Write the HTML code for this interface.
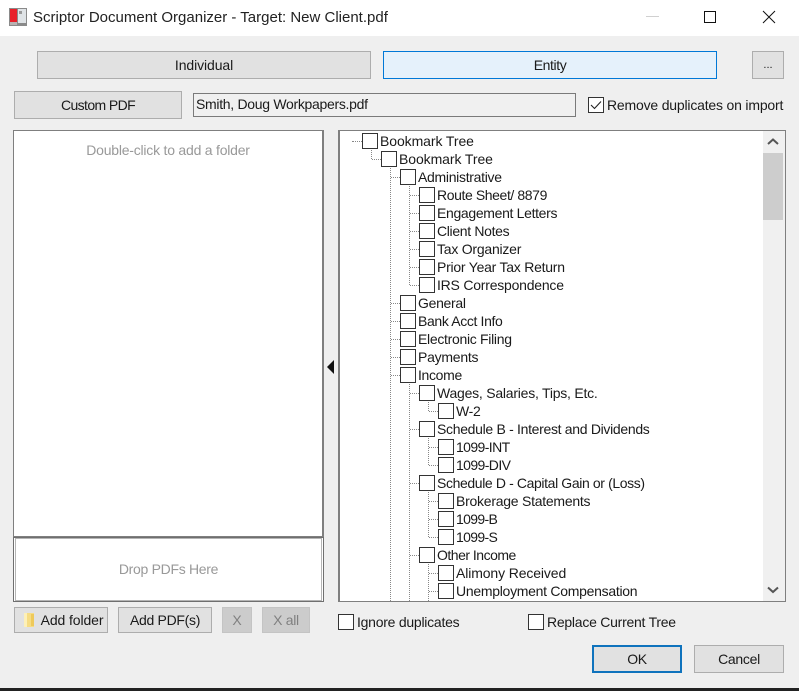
<!DOCTYPE html>
<html><head><meta charset="utf-8"><style>
html,body{margin:0;padding:0;width:799px;height:691px;overflow:hidden;background:#efefef;font-family:"Liberation Sans",sans-serif;font-size:14px;color:#1a1a1a}
div,span,svg{position:absolute;box-sizing:border-box}
.btn{background:#e1e1e1;border:1px solid #adadad;text-align:center;line-height:26px}
.cb{width:16px;height:16px;background:#fff;border:1px solid #333}
.t{white-space:nowrap;line-height:18px;height:18px;letter-spacing:-.3px}
.h{border-top:1px dotted #888;height:1px}
.v{border-left:1px dotted #888;width:1px}
</style></head><body>
<div style="left:0;top:0;width:799px;height:36px;background:#fff"></div>
<svg style="left:9px;top:8px" width="18" height="18" viewBox="0 0 18 18"><rect width="18" height="18" fill="#8a8a8a"/><rect x="1" y="1" width="7" height="13" fill="#e8202a"/><rect x="9" y="1" width="8" height="14" fill="#dfe3e6"/><rect x="10" y="3" width="3" height="3" fill="#9a9a9a"/><rect x="1" y="14" width="7" height="3" fill="#b9b1b1"/></svg>
<div class="t" style="left:33px;top:9px;font-size:15px;letter-spacing:0;color:#222">Scriptor Document Organizer - Target: New Client.pdf</div>
<div style="left:646px;top:16px;width:13px;height:1px;background:#d0d0d0"></div>
<div style="left:704px;top:11px;width:12px;height:12px;border:1px solid #111"></div>
<svg style="left:762px;top:10px" width="14" height="14" viewBox="0 0 14 14"><path d="M1 1L13 13M13 1L1 13" stroke="#111" stroke-width="1" fill="none"/></svg>

<div class="btn" style="left:37px;top:51px;width:334px;height:28px;letter-spacing:-.1px">Individual</div>
<div class="btn" style="left:383px;top:51px;width:334px;height:28px;background:#e5f1fb;border-color:#0078d7;letter-spacing:-.4px">Entity</div>
<div class="btn" style="left:752px;top:51px;width:32px;height:28px;font-size:11px">...</div>
<div class="btn" style="left:14px;top:91px;width:168px;height:28px;letter-spacing:-.6px">Custom PDF</div>
<div style="left:193px;top:93px;width:383px;height:24px;border:1px solid #7a7a7a;background:#f0f0f0;padding-left:2px;line-height:20px;letter-spacing:-.3px">Smith, Doug Workpapers.pdf</div>
<div class="cb" style="left:588px;top:97px"></div>
<svg style="left:588px;top:97px" width="16" height="16" viewBox="0 0 16 16"><path d="M3 8L6.500 11.500L13 4.500" stroke="#222" stroke-width="1.1" fill="none"/></svg>
<div class="t" style="left:607px;top:96px;letter-spacing:-.19px">Remove duplicates on import</div>

<div style="left:13px;top:130px;width:311px;height:408px;background:#fff;border:1px solid #7f7f7f;border-width:1px 2px 2px 1px;color:#999;text-align:center;padding-top:10px;line-height:18px;letter-spacing:-.22px">Double-click to add a folder</div>
<div style="left:13px;top:537px;width:311px;height:65px;background:#fff;border:1px solid #6f6f6f"></div>
<div style="left:15px;top:538px;width:307px;height:63px;border:1px solid #b5b5b5;color:#999;text-align:center;line-height:60px;letter-spacing:-.3px">Drop PDFs Here</div>

<svg style="left:326px;top:359px" width="9" height="16" viewBox="0 0 9 16"><path d="M8 1V15L1 8Z" fill="#111"/></svg>

<div style="left:338px;top:130px;width:448px;height:472px;background:#fff;border:1px solid #7f7f7f;border-left-width:2px"></div>
<div style="left:763px;top:131px;width:22px;height:470px;background:#f0f0f0"></div>
<div style="left:763px;top:153px;width:20px;height:67px;background:#cdcdcd"></div>
<svg style="left:767px;top:137px" width="12" height="10" viewBox="0 0 12 10"><path d="M1 7L6 2.500L11 7" stroke="#555" stroke-width="2" fill="none"/></svg>
<svg style="left:767px;top:585px" width="12" height="10" viewBox="0 0 12 10"><path d="M1 2.500L6 7L11 2.500" stroke="#555" stroke-width="2" fill="none"/></svg>

<!-- tree lines -->
<div class="h" style="left:352px;top:141px;width:10px"></div>
<div class="v" style="left:371px;top:150px;height:9px"></div>
<div class="h" style="left:372px;top:159px;width:9px"></div>
<div class="v" style="left:390px;top:168px;height:433px"></div>
<div class="v" style="left:409px;top:186px;height:99px"></div>
<div class="v" style="left:409px;top:384px;height:217px"></div>
<div class="v" style="left:428px;top:402px;height:9px"></div>
<div class="v" style="left:428px;top:438px;height:27px"></div>
<div class="v" style="left:428px;top:492px;height:45px"></div>
<div class="v" style="left:428px;top:564px;height:37px"></div>
<div class="h" style="left:391px;top:177px;width:9px"></div>
<div class="h" style="left:391px;top:303px;width:9px"></div>
<div class="h" style="left:391px;top:321px;width:9px"></div>
<div class="h" style="left:391px;top:339px;width:9px"></div>
<div class="h" style="left:391px;top:357px;width:9px"></div>
<div class="h" style="left:391px;top:375px;width:9px"></div>
<div class="h" style="left:410px;top:195px;width:9px"></div>
<div class="h" style="left:410px;top:213px;width:9px"></div>
<div class="h" style="left:410px;top:231px;width:9px"></div>
<div class="h" style="left:410px;top:249px;width:9px"></div>
<div class="h" style="left:410px;top:267px;width:9px"></div>
<div class="h" style="left:410px;top:285px;width:9px"></div>
<div class="h" style="left:410px;top:393px;width:9px"></div>
<div class="h" style="left:410px;top:429px;width:9px"></div>
<div class="h" style="left:410px;top:483px;width:9px"></div>
<div class="h" style="left:410px;top:555px;width:9px"></div>
<div class="h" style="left:429px;top:411px;width:9px"></div>
<div class="h" style="left:429px;top:447px;width:9px"></div>
<div class="h" style="left:429px;top:465px;width:9px"></div>
<div class="h" style="left:429px;top:501px;width:9px"></div>
<div class="h" style="left:429px;top:519px;width:9px"></div>
<div class="h" style="left:429px;top:537px;width:9px"></div>
<div class="h" style="left:429px;top:573px;width:9px"></div>
<div class="h" style="left:429px;top:591px;width:9px"></div>

<!-- tree rows -->
<div class="cb" style="left:362px;top:133px"></div><div class="t" style="left:380px;top:132px;letter-spacing:-.08px">Bookmark Tree</div>
<div class="cb" style="left:381px;top:151px"></div><div class="t" style="left:399px;top:150px;letter-spacing:-.08px">Bookmark Tree</div>
<div class="cb" style="left:400px;top:169px"></div><div class="t" style="left:418px;top:168px">Administrative</div>
<div class="cb" style="left:419px;top:187px"></div><div class="t" style="left:437px;top:186px;letter-spacing:-.4px">Route Sheet/ 8879</div>
<div class="cb" style="left:419px;top:205px"></div><div class="t" style="left:437px;top:204px;letter-spacing:-.33px">Engagement Letters</div>
<div class="cb" style="left:419px;top:223px"></div><div class="t" style="left:437px;top:222px;letter-spacing:-.33px">Client Notes</div>
<div class="cb" style="left:419px;top:241px"></div><div class="t" style="left:437px;top:240px;letter-spacing:-.23px">Tax Organizer</div>
<div class="cb" style="left:419px;top:259px"></div><div class="t" style="left:437px;top:258px;letter-spacing:-.24px">Prior Year Tax Return</div>
<div class="cb" style="left:419px;top:277px"></div><div class="t" style="left:437px;top:276px;letter-spacing:-.22px">IRS Correspondence</div>
<div class="cb" style="left:400px;top:295px"></div><div class="t" style="left:418px;top:294px">General</div>
<div class="cb" style="left:400px;top:313px"></div><div class="t" style="left:418px;top:312px;letter-spacing:-.36px">Bank Acct Info</div>
<div class="cb" style="left:400px;top:331px"></div><div class="t" style="left:418px;top:330px">Electronic Filing</div>
<div class="cb" style="left:400px;top:349px"></div><div class="t" style="left:418px;top:348px;letter-spacing:-.25px">Payments</div>
<div class="cb" style="left:400px;top:367px"></div><div class="t" style="left:418px;top:366px;letter-spacing:-.33px">Income</div>
<div class="cb" style="left:419px;top:385px"></div><div class="t" style="left:437px;top:384px;letter-spacing:-.23px">Wages, Salaries, Tips, Etc.</div>
<div class="cb" style="left:438px;top:403px"></div><div class="t" style="left:456px;top:402px;letter-spacing:-.33px">W-2</div>
<div class="cb" style="left:419px;top:421px"></div><div class="t" style="left:437px;top:420px;letter-spacing:-.31px">Schedule B - Interest and Dividends</div>
<div class="cb" style="left:438px;top:439px"></div><div class="t" style="left:456px;top:438px;letter-spacing:-.6px">1099-INT</div>
<div class="cb" style="left:438px;top:457px"></div><div class="t" style="left:456px;top:456px;letter-spacing:-.6px">1099-DIV</div>
<div class="cb" style="left:419px;top:475px"></div><div class="t" style="left:437px;top:474px;letter-spacing:-.38px">Schedule D - Capital Gain or (Loss)</div>
<div class="cb" style="left:438px;top:493px"></div><div class="t" style="left:456px;top:492px;letter-spacing:-.25px">Brokerage Statements</div>
<div class="cb" style="left:438px;top:511px"></div><div class="t" style="left:456px;top:510px;letter-spacing:-.66px">1099-B</div>
<div class="cb" style="left:438px;top:529px"></div><div class="t" style="left:456px;top:528px;letter-spacing:-.66px">1099-S</div>
<div class="cb" style="left:419px;top:547px"></div><div class="t" style="left:437px;top:546px;letter-spacing:-.5px">Other Income</div>
<div class="cb" style="left:438px;top:565px"></div><div class="t" style="left:456px;top:564px;letter-spacing:-.12px">Alimony Received</div>
<div class="cb" style="left:438px;top:583px"></div><div class="t" style="left:456px;top:582px;letter-spacing:-.28px">Unemployment Compensation</div>

<!-- bottom controls -->
<div class="btn" style="left:14px;top:607px;width:94px;height:26px;line-height:24px;padding-left:22px;letter-spacing:-.1px">Add folder</div>
<svg style="left:24px;top:613px" width="11" height="14" viewBox="0 0 11 14"><rect x="0" y="0" width="10" height="14" fill="#f6dc83"/><rect x="0" y="0" width="3" height="14" fill="#fdf0b8"/><rect x="7" y="1" width="3" height="12" fill="#eec95a"/></svg>
<div class="btn" style="left:118px;top:607px;width:94px;height:26px;line-height:24px;letter-spacing:-.3px">Add PDF(s)</div>
<div class="btn" style="left:222px;top:607px;width:30px;height:26px;line-height:24px;background:#ccc;border-color:#c4c4c4;color:#808080">X</div>
<div class="btn" style="left:262px;top:607px;width:48px;height:26px;line-height:24px;background:#ccc;border-color:#c4c4c4;color:#808080;letter-spacing:-.3px">X all</div>
<div class="cb" style="left:338px;top:614px"></div><div class="t" style="left:357px;top:613px;letter-spacing:-.25px">Ignore duplicates</div>
<div class="cb" style="left:528px;top:614px"></div><div class="t" style="left:547px;top:613px;letter-spacing:-.25px">Replace Current Tree</div>
<div class="btn" style="left:592px;top:645px;width:90px;height:28px;border:2px solid #0f73bd;line-height:24px;letter-spacing:-.4px">OK</div>
<div class="btn" style="left:694px;top:645px;width:90px;height:28px;letter-spacing:-.3px">Cancel</div>
<div style="left:0;top:688px;width:799px;height:3px;background:#222"></div>
</body></html>
